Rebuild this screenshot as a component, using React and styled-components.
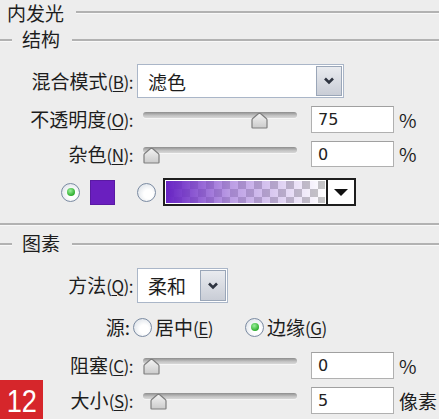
import React from "react";
import styled, { createGlobalStyle } from "styled-components";

const GlobalStyle = createGlobalStyle`
  html, body {
    margin: 0;
    padding: 0;
    background: #ededed;
  }
  body {
    font-family: "Noto Sans CJK SC", "Noto Sans", sans-serif;
    color: #1d1d1d;
  }
`;

const Wrapper = styled.div`
  position: relative;
  width: 439px;
  height: 419px;
  display: flex;
  flex-direction: column;
  overflow: hidden;
  background: #ededed;
`;

const TitleRow = styled.div`
  height: 24px;
  display: flex;
  align-items: center;
  padding-left: 7px;
`;

const Title = styled.div`
  font-size: 19px;
  line-height: 19px;
  margin-right: 12px;
`;

const Line = styled.div`
  height: 2px;
  background: #b2b2b2;
  border-bottom: 1px solid #f8f8f8;
  ${({ $width }) => ($width ? `width: ${$width}px;` : "flex: 1;")}
`;

const SectionRow = styled.div`
  height: ${({ $h }) => $h}px;
  display: flex;
  align-items: center;
`;

const SectionTitle = styled.div`
  font-size: 19px;
  line-height: 21px;
  margin: -3px 12px 0 10px;
`;

const Divider = styled.div`
  margin-top: 17px;
  height: 2px;
  background: #b2b2b2;
  border-bottom: 1px solid #f8f8f8;
`;

const Row = styled.div`
  height: ${({ $h }) => $h}px;
  margin-top: ${({ $mt }) => $mt || 0}px;
  padding-left: ${({ $pl }) => $pl || 0}px;
  display: flex;
  align-items: ${({ $align }) => $align || "center"};
`;

const Label = styled.div`
  width: ${({ $pr }) => 133 - ($pr || 0)}px;
  padding-right: ${({ $pr }) => $pr || 0}px;
  flex-shrink: 0;
  text-align: right;
  font-size: 19px;
  line-height: 26px;
  white-space: nowrap;
  align-self: center;
`;

const Paren = styled.span`
  font-size: 17px;
  letter-spacing: -0.5px;
`;

const Key = styled.span`
  text-decoration: underline;
  text-underline-offset: 2px;
`;

const SelectBox = styled.div`
  width: ${({ $width }) => $width}px;
  height: 100%;
  margin-left: 4px;
  box-sizing: border-box;
  display: flex;
  align-items: stretch;
  background: #fff;
  border: 1px solid #aab6c8;
  padding: 1px;
`;

const SelectText = styled.div`
  flex: 1;
  padding-left: 9px;
  font-size: 19px;
  display: flex;
  align-items: center;
`;

const SelectButton = styled.div`
  width: 24px;
  display: flex;
  align-items: center;
  justify-content: center;
  border: 1px solid #9aa6b8;
  background: linear-gradient(#e9ebef, #c9cdd6);
`;

const SliderBox = styled.div`
  position: relative;
  width: 154px;
  height: 20px;
  margin-left: 10px;
  margin-top: 6px;
  flex-shrink: 0;
`;

const Track = styled.div`
  height: 6px;
  border-radius: 3px;
  background: linear-gradient(#8d8d8d, #c4c4c4 60%, #d8d8d8);
  box-shadow: 0 1px 0 #f6f6f6;
`;

const Thumb = styled.div`
  position: absolute;
  top: 0;
  left: ${({ $value }) => $value * 1.44 - 1}px;
  width: 19px;
  height: 17px;
  line-height: 0;
`;

const NumberInput = styled.div`
  width: 83px;
  height: 100%;
  box-sizing: border-box;
  margin-left: 14px;
  background: #fff;
  border: 1px solid #b0b0b0;
  border-top-color: #a0a0a0;
  padding-left: 6px;
  font-family: "DejaVu Sans", sans-serif;
  font-size: 16px;
  display: flex;
  align-items: center;
  color: #222;
`;

const Unit = styled.div`
  margin-left: 5px;
  font-size: 19px;
  line-height: 26px;
  align-self: center;
`;

const Radio = styled.div`
  position: relative;
  width: 19px;
  height: 19px;
  box-sizing: border-box;
  flex-shrink: 0;
  margin-left: ${({ $ml }) => $ml || 0}px;
  border-radius: 50%;
  border: 1.5px solid #7b8ba2;
  background: radial-gradient(circle at 60% 60%, #ffffff 30%, #dfe4ea 80%);

  &::after {
    content: "";
    display: ${({ $checked }) => ($checked ? "block" : "none")};
    position: absolute;
    left: 50%;
    top: 50%;
    width: 8px;
    height: 8px;
    margin: -4px 0 0 -4px;
    border-radius: 50%;
    background: radial-gradient(circle at 40% 35%, #9af09a, #2fae2f 70%);
  }
`;

const RadioText = styled.div`
  margin-left: 3px;
  font-size: 19px;
  line-height: 26px;
`;

const Swatch = styled.div`
  width: 25px;
  height: 25px;
  margin-left: 10px;
  box-sizing: border-box;
  background: #6a1fbf;
  border: 1px solid #5a1aa3;
`;

const Gradient = styled.div`
  width: 193px;
  height: 28px;
  margin-left: 7px;
  box-sizing: border-box;
  border: 2px solid #1e1e1e;
  display: flex;
  background: #fff;
`;

const GradientFill = styled.div`
  flex: 1;
  margin: 1px;
  background:
    linear-gradient(to right, rgba(104, 36, 196, 1), rgba(140, 90, 210, 0.6) 40%, rgba(200, 180, 230, 0) 100%),
    conic-gradient(#c6c6c6 25%, #ffffff 0 50%, #c6c6c6 0 75%, #ffffff 0);
  background-size: 100% 100%, 16px 16px;
`;

const GradientButton = styled.div`
  width: 26px;
  border-left: 2px solid #1e1e1e;
  display: flex;
  align-items: center;
  justify-content: center;
  background: #fff;
`;

const Triangle = styled.div`
  width: 0;
  height: 0;
  border-left: 7px solid transparent;
  border-right: 7px solid transparent;
  border-top: 7px solid #111;
`;

const Badge = styled.div`
  position: absolute;
  left: 0;
  bottom: 0;
  width: 43px;
  height: 39px;
  background: #d6262b;
  display: flex;
  align-items: center;
  justify-content: center;
`;

const BadgeText = styled.div`
  font-family: "Liberation Sans", Arial, sans-serif;
  font-size: 32px;
  line-height: 1;
  color: #fff;
  transform: scaleX(0.85);
  margin-top: 2px;
`;

const Chevron = () => (
  <svg width="12" height="8" viewBox="0 0 12 8">
    <path d="M2 1.5 L6 5.5 L10 1.5" fill="none" stroke="#2e3440" strokeWidth="2.6" />
  </svg>
);

const ThumbIcon = () => (
  <svg width="19" height="17" viewBox="0 0 19 17">
    <defs>
      <linearGradient id="thumbFill" x1="0" y1="0" x2="0" y2="1">
        <stop offset="0" stopColor="#f4f4f4" />
        <stop offset="1" stopColor="#cbcbcb" />
      </linearGradient>
    </defs>
    <path
      d="M2 15.5 L2 8 Q2 7 3 6.3 L8.6 1.6 Q9.5 1 10.4 1.6 L16 6.3 Q17 7 17 8 L17 15.5 Q17 16 16.3 16 L2.7 16 Q2 16 2 15.5 Z"
      fill="url(#thumbFill)"
      stroke="#7e7e7e"
      strokeWidth="1.2"
    />
  </svg>
);

const Slider = ({ value }) => (
  <SliderBox>
    <Track />
    <Thumb $value={value}>
      <ThumbIcon />
    </Thumb>
  </SliderBox>
);

const Select = ({ value, width }) => (
  <SelectBox $width={width}>
    <SelectText>{value}</SelectText>
    <SelectButton>
      <Chevron />
    </SelectButton>
  </SelectBox>
);

const FieldLabel = ({ text, k }) => (
  <Label>
    {text}
    <Paren>
      (<Key>{k}</Key>):
    </Paren>
  </Label>
);

const SliderRow = ({ label, k, value, unit, h, mt }) => (
  <Row $h={h} $mt={mt} $align="flex-start">
    <FieldLabel text={label} k={k} />
    <Slider value={value} />
    <NumberInput>{value}</NumberInput>
    <Unit>{unit}</Unit>
  </Row>
);

const Section = ({ title, h }) => (
  <SectionRow $h={h}>
    <Line $width={12} />
    <SectionTitle>{title}</SectionTitle>
    <Line />
  </SectionRow>
);

const InnerGlow = () => {
  return (
    <Wrapper>
      <TitleRow>
        <Title>内发光</Title>
        <Line />
      </TitleRow>

      <Section title="结构" h={32} />

      <Row $h={34} $mt={8}>
        <FieldLabel text="混合模式" k="B" />
        <Select value="滤色" width={207} />
      </Row>

      <SliderRow label="不透明度" k="O" value={75} unit="%" h={27} mt={8} />
      <SliderRow label="杂色" k="N" value={0} unit="%" h={26} mt={8} />

      <Row $h={28} $mt={11} $pl={61}>
        <Radio $checked />
        <Swatch />
        <Radio $ml={22} />
        <Gradient>
          <GradientFill />
          <GradientButton>
            <Triangle />
          </GradientButton>
        </Gradient>
      </Row>

      <Divider />

      <Section title="图素" h={36} />

      <Row $h={35} $mt={6}>
        <FieldLabel text="方法" k="Q" />
        <Select value="柔和" width={91} />
      </Row>

      <Row $h={28} $mt={10}>
        <Label $pr={3}>源:</Label>
        <Radio />
        <RadioText>
          居中<Paren>(<Key>E</Key>)</Paren>
        </RadioText>
        <Radio $checked $ml={32} />
        <RadioText>
          边缘<Paren>(<Key>G</Key>)</Paren>
        </RadioText>
      </Row>

      <SliderRow label="阻塞" k="C" value={0} unit="%" h={27} mt={11} />
      <SliderRow label="大小" k="S" value={5} unit="像素" h={27} mt={8} />

      <Badge>
        <BadgeText>12</BadgeText>
      </Badge>
    </Wrapper>
  );
};

export default function App() {
  return (
    <>
      <GlobalStyle />
      <InnerGlow />
    </>
  );
}
